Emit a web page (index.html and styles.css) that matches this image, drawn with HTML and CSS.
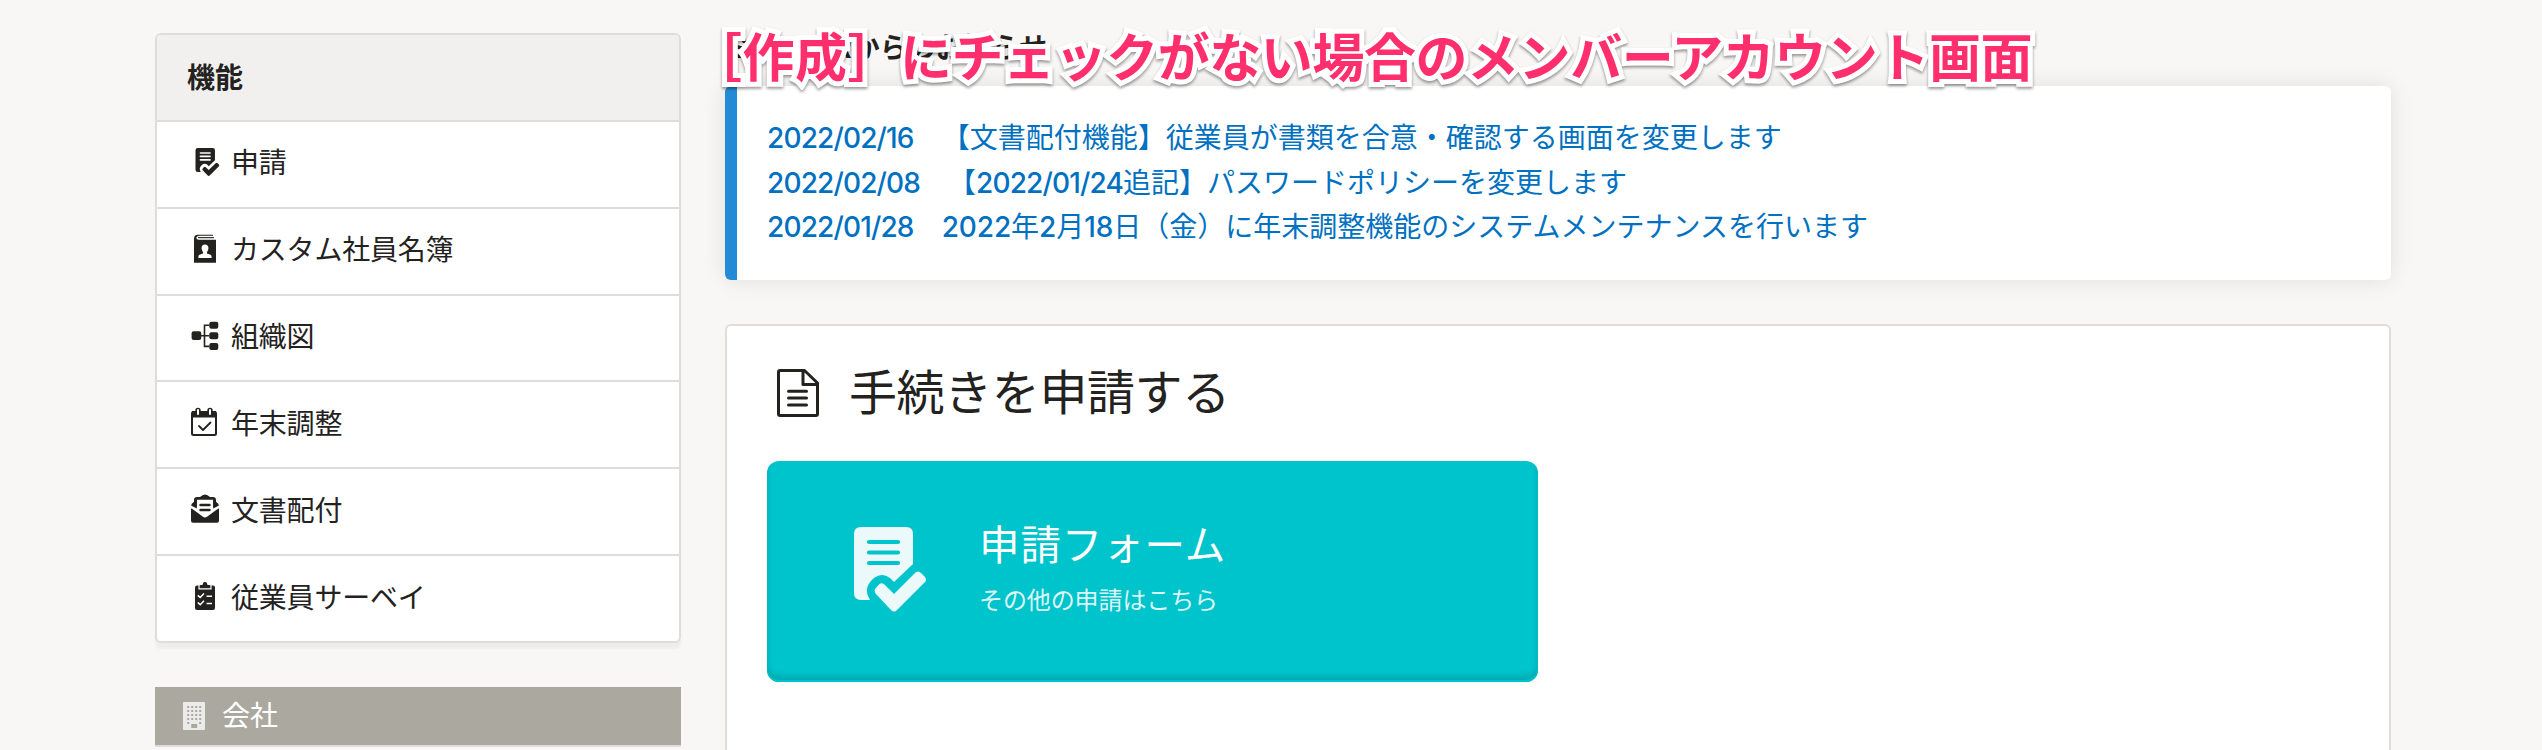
FILE: index.html
```html
<!DOCTYPE html>
<html lang="ja">
<head>
<meta charset="utf-8">
<title>ホーム</title>
<link rel="stylesheet" href="styles.css">
</head>
<body>
<div class="page">
  <aside class="sidebar">
    <nav class="menu">
      <h2 class="menu-title">機能</h2>
      <a class="menu-item">
        <svg class="menu-icon" viewBox="0 0 30 30"><g transform="translate(5.5 1) scale(.33)"><path fill="currentColor" d="M7 0H52Q59 0 59 7V37L40 55L36 51Q28 45 20 51Q8 61 16 73H7Q0 73 0 66V7Q0 0 7 0ZM21 64L25 58Q28 55 31 58L40 67L61 46Q64 43 67 46L71 50Q73 53 71 55L43 83Q40 86 37 83L21 67Z"/><path stroke="#fff" stroke-width="5" stroke-linecap="round" d="M15 15H44M15 25.5H44M15 36H44"/></g></svg>
        <span>申請</span>
      </a>
      <a class="menu-item">
        <svg class="menu-icon" viewBox="0 0 30 30"><path fill="currentColor" d="M4 5Q4 .8 8 .8H23V1.8H9Q6.3 2 6.3 4Q6.3 5.8 9 5.8H26V28.7H4Z"/><path fill="currentColor" d="M8 3.1H24V4.2H8Z"/><path fill="#fff" d="M15 10.5c2.4 0 3.6 1.6 3.4 4.1c-.1 1.6-.7 2.6-1.4 3.4v1.4l3.5 1.4q1.1.5 1.1 2V24H8.400v-1.200q0-1.500 1.100-2l3.500-1.400V18c-.7-.8-1.300-1.800-1.400-3.400c-.2-2.500 1-4.100 3.400-4.100Z"/></svg>
        <span>カスタム社員名簿</span>
      </a>
      <a class="menu-item">
        <svg class="menu-icon" viewBox="0 0 30 30"><g fill="currentColor"><rect x="1.600" y="10.300" width="9.600" height="8.600" rx="2"/><rect x="19.300" y=".8" width="9" height="7" rx="2"/><rect x="19.300" y="11.300" width="9" height="7" rx="2"/><rect x="19.300" y="21.900" width="9" height="7" rx="2"/></g><path fill="none" stroke="currentColor" stroke-width="1.600" d="M19.300 4.200H14.500V25.400H19.300M11 14.800H19.300"/></svg>
        <span>組織図</span>
      </a>
      <a class="menu-item">
        <svg class="menu-icon" viewBox="0 0 30 30"><rect x="2" y="5" width="24" height="23" rx="1.500" fill="none" stroke="currentColor" stroke-width="2"/><path fill="currentColor" d="M2 4H26V10.500H2Z"/><path stroke="currentColor" stroke-width="5.400" stroke-linecap="round" d="M8 3.500V6M20 3.500V6"/><path stroke="#fff" stroke-width="2" stroke-linecap="round" d="M8 3V7M20 3V7"/><path fill="none" stroke="currentColor" stroke-width="1.800" stroke-linecap="round" stroke-linejoin="round" d="M9 19L13 23L20.500 15.500"/></svg>
        <span>年末調整</span>
      </a>
      <a class="menu-item">
        <svg class="menu-icon" viewBox="0 0 30 30"><path fill="currentColor" d="M1 14.500L29 14.500V26.700Q29 28.800 27 28.800H3Q1 28.800 1 26.700ZM1 12Q1 9.500 4 8V6Q4 3 7 3H10Q12.500 .5 15 .5T20 3H23Q26 3 26 6V8Q29 9.500 29 12L26 15H4Z"/><path fill="#fff" d="M6.800 5.800H23.200V13.200L29 10.500V14L17 22.800Q15 24 13 22.800L1 14V10.500L6.800 13.200Z"/><path fill="currentColor" d="M1 11.500L4 8L6.800 6V14.500L1 11.500ZM29 11.500L26 8L23.200 6V14.500Z"/><path stroke="currentColor" stroke-width="2.400" stroke-linecap="round" d="M10.500 11H19.500M10.500 16H19.500"/></svg>
        <span>文書配付</span>
      </a>
      <a class="menu-item">
        <svg class="menu-icon" viewBox="0 0 30 30"><rect x="5" y="4.500" width="20" height="24.500" rx="2" fill="currentColor"/><path fill="currentColor" stroke="#fff" stroke-width="1.200" d="M9 7.800V4.500Q9 3.300 10.500 3.300H12Q12.500 .2 15 .2T18 3.300H19.500Q21 3.300 21 4.500V7.800Z"/><path fill="none" stroke="#fff" stroke-width="1.600" d="M7.800 14.300L10.200 16.500L14 12.500M7.800 21.500L10.200 23.700L14 19.700M16.500 15.300H22M16.500 22.500H22"/></svg>
        <span>従業員サーベイ</span>
      </a>
    </nav>
    <div class="company">
      <svg class="company-icon" viewBox="0 0 22 28"><rect width="22" height="28" rx="1" fill="#ebebe9"/><path stroke="#aba8a0" stroke-width="2" stroke-dasharray="2 2" d="M4.200 5H18.200M4.200 9H18.200M4.200 13H18.200M4.200 17H18.200"/><path fill="#aba8a0" d="M4.200 20H6.200V22H4.200ZM16.200 20H18.200V22H16.200ZM8.200 22H14.200V26H8.200Z"/></svg>
      <span>会社</span>
    </div>
  </aside>
  <main class="main">
    <h2 class="news-title">SmartHRからのお知らせ</h2>
    <section class="news">
      <a><span class="num">2022/02/16</span>　【文書配付機能】従業員が書類を合意・確認する画面を変更します</a>
      <a><span class="num">2022/02/08</span>　【<span class="num">2022/01/24</span>追記】パスワードポリシーを変更します</a>
      <a><span class="num">2022/01/28</span>　<span class="num-wide">2022</span>年<span class="num-wide">2</span>月<span class="num-wide">18</span>日（金）に年末調整機能のシステムメンテナンスを行います</a>
    </section>
    <section class="card">
      <h1 class="card-title">
        <svg class="card-icon" viewBox="0 0 42 48"><path fill="none" stroke="currentColor" stroke-width="3" stroke-linejoin="round" d="M3 1.500H27.500L40.500 14V45Q40.500 46.500 39 46.500H3Q1.500 46.500 1.500 45V3Q1.500 1.500 3 1.500ZM26 2V15.500H40"/><path stroke="currentColor" stroke-width="3" stroke-linecap="round" d="M11.500 22.300H29.500M11.500 29H29.500M11.500 36H29.500"/></svg>
        <span>手続きを申請する</span>
      </h1>
      <a class="form-tile">
        <svg class="form-icon" viewBox="0 0 72 85"><path fill="#ebf9fa" d="M7 0H52Q59 0 59 7V37L40 55L36 51Q28 45 20 51Q8 61 16 73H7Q0 73 0 66V7Q0 0 7 0ZM21 62L25 57.500Q28 55 31 58L40 67L61 46Q64 43 67 46L71 50Q73 53 71 55L43 83Q40 86 37 83L22 67Q20 64.500 21 62Z"/><path stroke="#00c4cc" stroke-width="4.200" stroke-linecap="round" d="M15 15H44M15 25.500H44M15 36H44"/></svg>
        <span class="form-text">
          <span class="form-name">申請フォーム</span>
          <span class="form-note">その他の申請はこちら</span>
        </span>
      </a>
    </section>
  </main>
  <div class="annotation"><span class="annotation-tag">［作成］</span>にチェックがない場合のメンバーアカウント画面</div>
</div>
</body>
</html>
```
FILE: styles.css
```css
* { box-sizing: border-box; }
body {
  margin: 0;
  background: #f8f7f5;
  color: #23221e;
  font-family: Inter, "Noto Sans CJK JP", sans-serif;
  font-size: 28px;
  line-height: 1;
}
h1, h2 { margin: 0; font-size: inherit; }
.page {
  position: relative;
  width: 2542px;
  height: 750px;
  overflow: hidden;
  display: flex;
  gap: 44px;
  padding: 33px 151px 0 155px;
}
.sidebar { width: 526px; flex: none; }
.menu {
  height: 610px;
  display: flex;
  flex-direction: column;
  border: 2px solid #dddddd;
  border-radius: 6px;
  background: #fff;
  box-shadow: 0 6px 2px rgba(0, 0, 0, .04);
}
.menu-title {
  flex: none;
  height: 85px;
  display: flex;
  align-items: center;
  padding: 0 30px;
  background: #f1f0ee;
  border-radius: 4px 4px 0 0;
  font-weight: 700;
}
.menu-item {
  flex: 1;
  display: flex;
  align-items: center;
  gap: 11px;
  padding: 0 0 2px 33px;
  border-top: 2px solid #dddddd;
  letter-spacing: -.2px;
}
.menu-icon { width: 30px; height: 30px; margin-top: -3px; }
.company {
  height: 60px;
  margin-top: 44px;
  display: flex;
  align-items: center;
  gap: 17px;
  padding-left: 28px;
  background: #aba8a0;
  border-bottom: 2px solid #dddddd;
  color: #fff;
}
.company-icon { width: 22px; height: 28px; }
.main { flex: 1; }
.news-title { height: 53px; padding-left: 5px; font-weight: 700; line-height: 30px; }
.news {
  height: 194px;
  padding: 30px 0 0 30px;
  display: flex;
  flex-direction: column;
  border-left: 12px solid #238bd6;
  border-radius: 6px;
  background: #fff;
  box-shadow: 0 0 22px rgba(0, 0, 0, .1);
  color: #0071c1;
  line-height: 44.6px;
  white-space: nowrap;
  text-spacing-trim: space-all;
}
.num { letter-spacing: -.85px; font-weight: 500; }
.num-wide { letter-spacing: -.1px; font-weight: 500; }
.card {
  height: 500px;
  margin-top: 44px;
  padding: 43px 40px;
  border: 2px solid #dddddd;
  border-radius: 6px;
  background: #fff;
}
.card-title {
  display: flex;
  align-items: center;
  gap: 30px;
  padding-left: 10px;
  font-size: 48px;
  font-weight: 400;
  letter-spacing: -.4px;
}
.card-icon { width: 42px; height: 48px; }
.form-tile {
  width: 771px;
  height: 221px;
  margin-top: 44px;
  padding-left: 87px;
  display: flex;
  align-items: center;
  gap: 53px;
  border-radius: 12px;
  background: #00c4cc;
  box-shadow: inset 0 -2px 0 #00c4cc, inset 0 -6px 6px rgba(0, 0, 0, .14);
  color: #fff;
}
.form-icon { width: 72px; height: 85px; margin-top: -4px; }
.form-text { display: flex; flex-direction: column; gap: 23px; padding-bottom: 4px; }
.form-name { font-size: 40.5px; letter-spacing: .9px; }
.form-note { font-size: 24px; letter-spacing: -.1px; color: #dcf6f7; }
/* Caption laid over the page */
.annotation {
  position: absolute;
  left: 690px;
  top: 22px;
  font-size: 52px;
  line-height: 74px;
  font-weight: 700;
  letter-spacing: -.45px;
  white-space: nowrap;
  color: #ff2f6e;
  -webkit-text-stroke: 10px #fff;
  paint-order: stroke fill;
  stroke-linejoin: round;
  filter: drop-shadow(0 2px 1.500px rgba(0, 0, 0, .4));
}
.annotation-tag { letter-spacing: .5px; }
```
